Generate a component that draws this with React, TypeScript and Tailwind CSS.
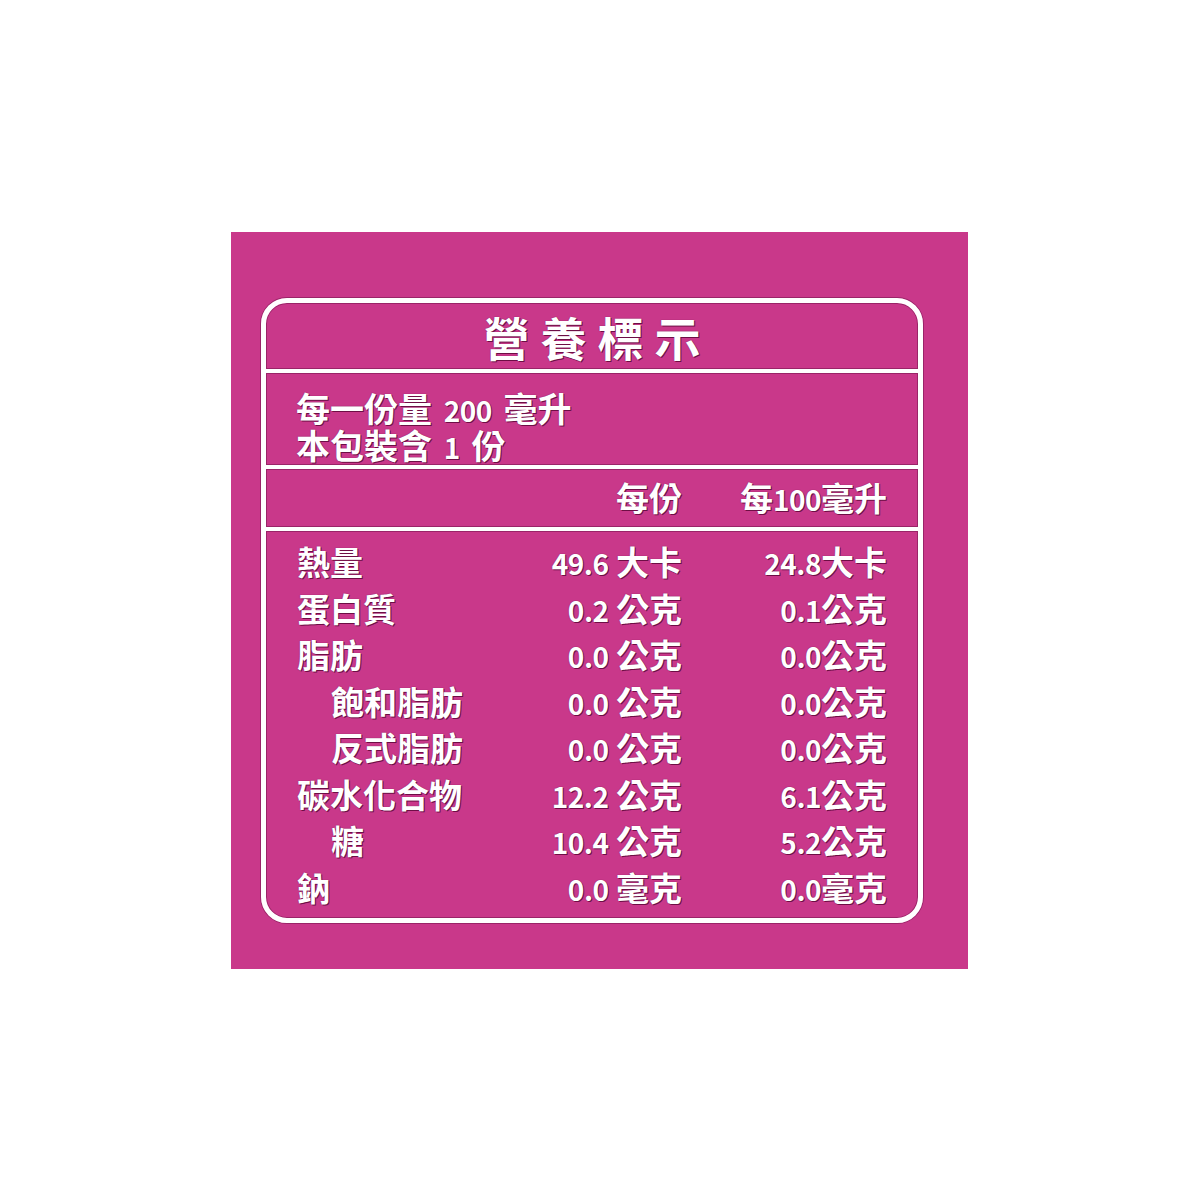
import React from 'react';

type Row = {
  label: string;
  indent?: boolean;
  serving: [string, string];
  per100: [string, string];
};

const rows: Row[] = [
  { label: '熱量', serving: ['49.6', '大卡'], per100: ['24.8', '大卡'] },
  { label: '蛋白質', serving: ['0.2', '公克'], per100: ['0.1', '公克'] },
  { label: '脂肪', serving: ['0.0', '公克'], per100: ['0.0', '公克'] },
  { label: '飽和脂肪', indent: true, serving: ['0.0', '公克'], per100: ['0.0', '公克'] },
  { label: '反式脂肪', indent: true, serving: ['0.0', '公克'], per100: ['0.0', '公克'] },
  { label: '碳水化合物', serving: ['12.2', '公克'], per100: ['6.1', '公克'] },
  { label: '糖', indent: true, serving: ['10.4', '公克'], per100: ['5.2', '公克'] },
  { label: '鈉', serving: ['0.0', '毫克'], per100: ['0.0', '毫克'] },
];

const textStyle =
  'text-white font-bold [text-shadow:1px_1px_0_#6d0e45,0_0_1px_#6d0e45]';

const Num = ({ children }: { children: React.ReactNode }) => (
  <span className="text-[28px] leading-[0] tracking-[-0.5px]">{children}</span>
);

const Divider = () => (
  <div className="h-[4px] shrink-0 bg-white shadow-[0_0_0_1px_#9a2468]" />
);

const NutritionLabel: React.FC = () => {
  return (
    <div className="w-[662px] h-[625px] rounded-[26px] border-[5px] border-white shadow-[0_0_0_1px_#9a2468,inset_0_0_0_1px_#9a2468] flex flex-col overflow-hidden">
      <div className="h-[66px] shrink-0 flex items-center justify-center">
        <h1 className={`${textStyle} text-[46px] tracking-[11px] pl-[11px] leading-none`}>營養標示</h1>
      </div>
      <Divider />
      <div className={`${textStyle} h-[92px] shrink-0 pt-[16px] pl-[30px] text-[34px] leading-[37px] [word-spacing:4px]`}>
        <div>
          每一份量 <Num>200</Num> 毫升
        </div>
        <div>
          本包裝含 <Num>1</Num> 份
        </div>
      </div>
      <Divider />
      <div className={`${textStyle} h-[58px] shrink-0 flex items-center pl-[30px] pr-[31px] text-[33px]`}>
        <div className="flex-1" />
        <div className="w-[160px] text-right">每份</div>
        <div className="w-[205px] text-right">
          每<Num>100</Num>毫升
        </div>
      </div>
      <Divider />
      <div className={`${textStyle} pt-[7px] pl-[31px] pr-[31px] text-[33px] leading-[46.5px]`}>
        {rows.map((row) => (
          <div key={row.label} className="flex h-[46.5px]">
            <div className={`flex-1 ${row.indent ? 'pl-[34px]' : ''}`}>{row.label}</div>
            <div className="w-[160px] text-right">
              <Num>{row.serving[0]}</Num> {row.serving[1]}
            </div>
            <div className="w-[205px] text-right">
              <Num>{row.per100[0]}</Num>
              {row.per100[1]}
            </div>
          </div>
        ))}
      </div>
    </div>
  );
};

export default function App() {
  return (
    <div
      className="w-[1200px] h-[1200px] bg-white pt-[232px] pl-[231px]"
      style={{ fontFamily: '"Noto Sans CJK TC", "Noto Sans", sans-serif' }}
    >
      <div className="w-[737px] h-[737px] bg-[#c9388a] pt-[66px] pl-[30px]">
        <NutritionLabel />
      </div>
    </div>
  );
}
